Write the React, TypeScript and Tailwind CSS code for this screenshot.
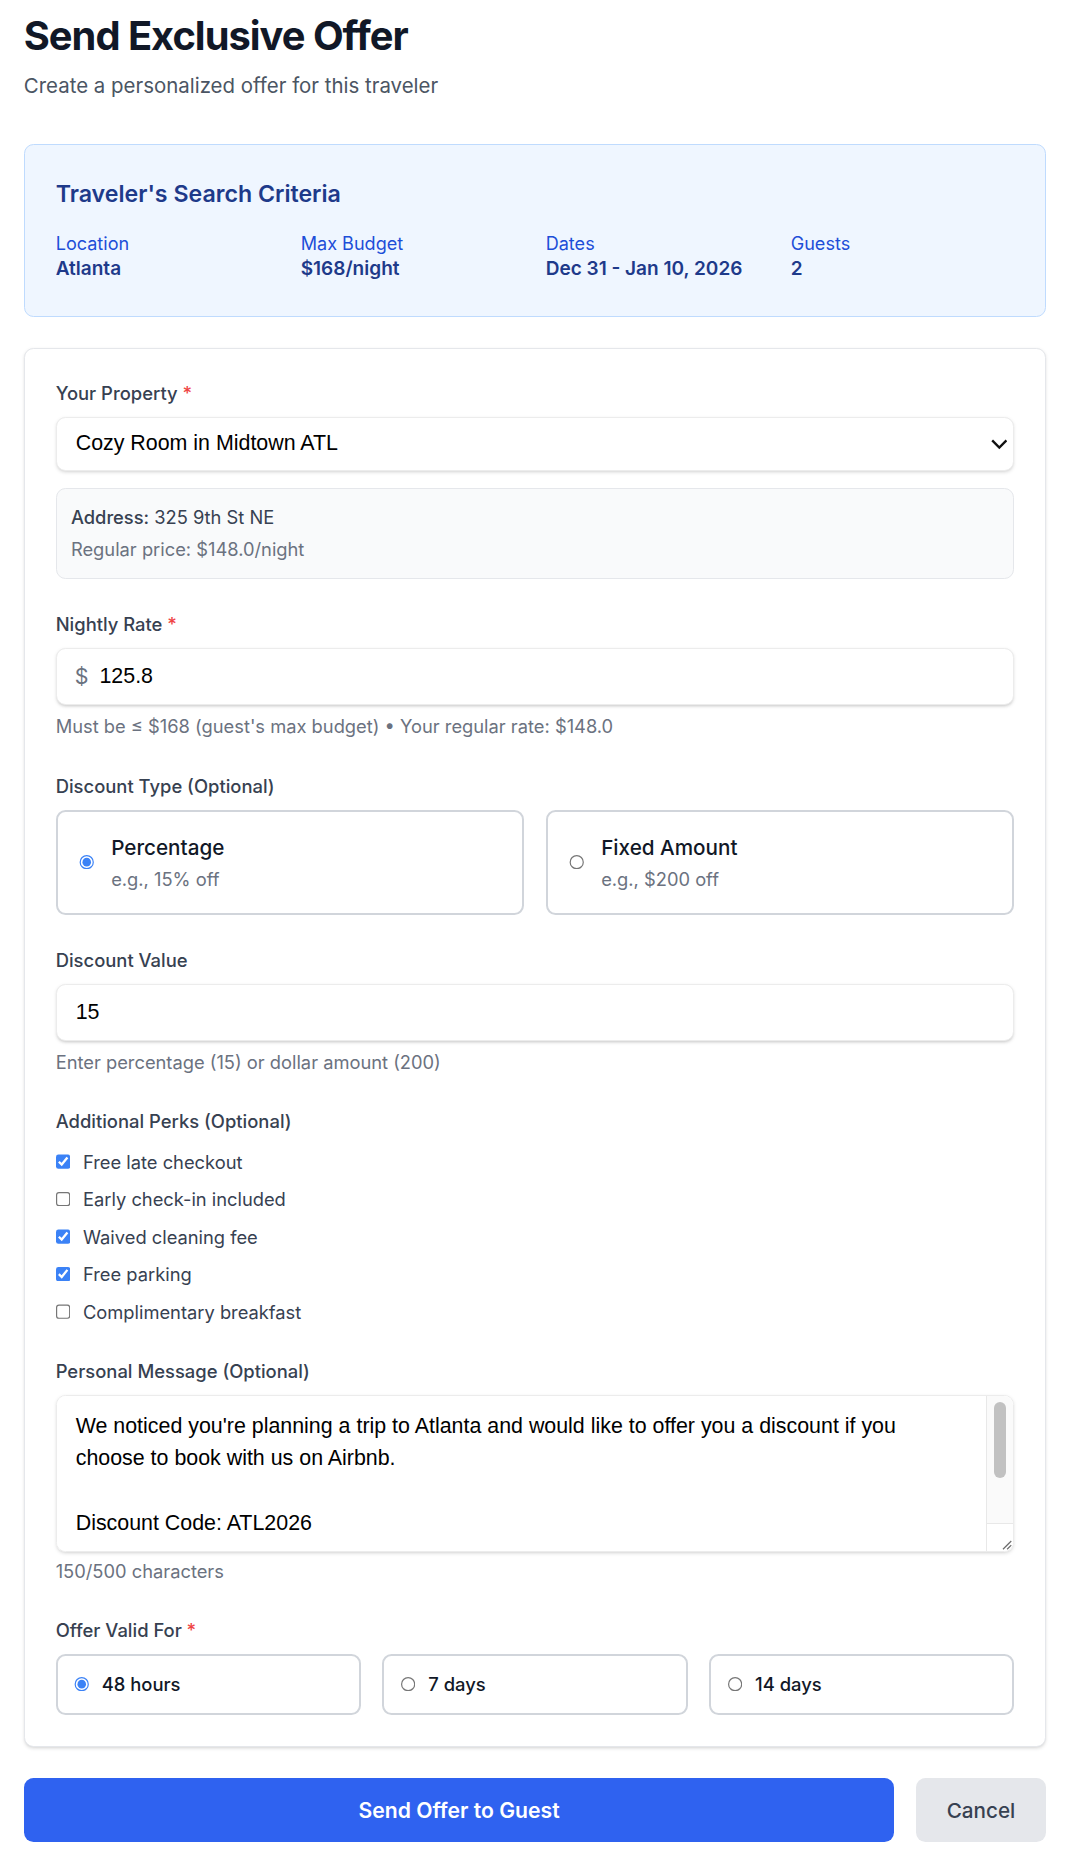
import { useState } from "react";

const criteria = [
  { label: "Location", value: "Atlanta" },
  { label: "Max Budget", value: "$168/night" },
  { label: "Dates", value: "Dec 31 - Jan 10, 2026" },
  { label: "Guests", value: "2" },
];

const perkOptions = [
  "Free late checkout",
  "Early check-in included",
  "Waived cleaning fee",
  "Free parking",
  "Complimentary breakfast",
];

const discountTypes = [
  { id: "percentage", title: "Percentage", hint: "e.g., 15% off" },
  { id: "fixed", title: "Fixed Amount", hint: "e.g., $200 off" },
];

const validity = ["48 hours", "7 days", "14 days"];

const message =
  "We noticed you're planning a trip to Atlanta and would like to offer you a discount if you choose to book with us on Airbnb.\n\nDiscount Code: ATL2026";

function FieldLabel({ children, required }: { children: React.ReactNode; required?: boolean }) {
  return (
    <label className="mb-2 block text-[15.5px] leading-6 font-medium text-[#374151]">
      {children}
      {required && <span className="ml-1 text-[#ef4444]">*</span>}
    </label>
  );
}

export default function App() {
  const [rate, setRate] = useState("125.8");
  const [discountType, setDiscountType] = useState("percentage");
  const [discountValue, setDiscountValue] = useState("15");
  const [perks, setPerks] = useState<string[]>(["Free late checkout", "Waived cleaning fee", "Free parking"]);
  const [note, setNote] = useState(message);
  const [valid, setValid] = useState("48 hours");

  const togglePerk = (p: string) =>
    setPerks((prev) => (prev.includes(p) ? prev.filter((x) => x !== p) : [...prev, p]));

  return (
    <div className="bg-white [zoom:1.189] [font-family:Inter,sans-serif]">
      <div className="px-5 pt-2.5 pb-3">
        <h1 className="text-[33.5px] leading-10 font-bold tracking-tight text-[#111827]">Send Exclusive Offer</h1>
        <p className="mt-2 text-[17.2px] leading-7 text-[#4b5563]">Create a personalized offer for this traveler</p>

        {/* search criteria */}
        <div className="mt-[35px] rounded-lg border border-[#bfdbfe] bg-[#eff6ff] px-[26px] pt-[28px] pb-[27px]">
          <h2 className="text-[19.5px] leading-7 font-semibold text-[#1e3a8a]">Traveler's Search Criteria</h2>
          <div className="mt-[17px] grid grid-cols-4 gap-[18px]">
            {criteria.map((c) => (
              <div key={c.label}>
                <div className="text-[15.2px] leading-5 text-[#1d4ed8]">{c.label}</div>
                <div className="text-base font-semibold text-[#1e3a8a]">{c.value}</div>
              </div>
            ))}
          </div>
        </div>

        {/* form */}
        <div className="mt-[26px] space-y-[26px] rounded-lg border border-[#e5e7eb] bg-white px-[26px] pt-[25px] pb-[26px] shadow-sm">
          <div>
            <FieldLabel required>Your Property</FieldLabel>
            <div className="relative">
              <select className="block h-[46px] w-full appearance-none rounded-lg border border-[#ececec] bg-white px-4 text-lg text-black shadow-sm [font-family:'Liberation_Sans',Arial,sans-serif]">
                <option>Cozy Room in Midtown ATL</option>
              </select>
              <svg
                className="pointer-events-none absolute top-1/2 right-1.5 -translate-y-1/2"
                width="14"
                height="9"
                viewBox="0 0 14 9"
                fill="none"
                stroke="#111"
                strokeWidth="2"
              >
                <polyline points="1,1.5 7,7.5 13,1.5" />
              </svg>
            </div>
            <div className="mt-3.5 rounded-lg border border-[#e5e7eb] bg-[#f9fafb] p-3">
              <p className="text-[15.4px] leading-6 text-[#374151]">
                <span className="font-medium">Address:</span> 325 9th St NE
              </p>
              <p className="mt-[3px] text-[15.4px] leading-6 text-[#6b7280]">Regular price: $148.0/night</p>
            </div>
          </div>

          <div>
            <FieldLabel required>Nightly Rate</FieldLabel>
            <div className="relative">
              <span className="absolute top-1/2 left-4 -translate-y-1/2 text-lg text-[#6b7280]">$</span>
              <input
                value={rate}
                onChange={(e) => setRate(e.target.value)}
                className="block h-12 w-full rounded-lg border border-[#ececec] bg-white pr-4 pl-9 text-lg text-black shadow-sm [font-family:'Liberation_Sans',Arial,sans-serif]"
              />
            </div>
            <p className="mt-1.5 text-[15.4px] leading-6 text-[#6b7280]">
              Must be ≤ $168 (guest's max budget) • Your regular rate: $148.0
            </p>
          </div>

          <div>
            <FieldLabel>Discount Type (Optional)</FieldLabel>
            <div className="grid grid-cols-2 gap-[18px]">
              {discountTypes.map((d) => (
                <label
                  key={d.id}
                  className="flex cursor-pointer items-center rounded-lg border-2 border-[#d1d5db] px-4 py-[16.5px]"
                >
                  <input
                    type="radio"
                    name="discountType"
                    checked={discountType === d.id}
                    onChange={() => setDiscountType(d.id)}
                    className="ml-0.5 accent-[#3b82f6]"
                  />
                  <div className="ml-3.5">
                    <div className="text-[17.4px] leading-7 font-medium text-[#111827]">{d.title}</div>
                    <div className="text-[15.4px] leading-6 text-[#6b7280]">{d.hint}</div>
                  </div>
                </label>
              ))}
            </div>
          </div>

          <div>
            <FieldLabel>Discount Value</FieldLabel>
            <input
              value={discountValue}
              onChange={(e) => setDiscountValue(e.target.value)}
              className="block h-12 w-full rounded-lg border border-[#ececec] bg-white px-4 text-lg text-black shadow-sm [font-family:'Liberation_Sans',Arial,sans-serif]"
            />
            <p className="mt-1.5 text-[15.4px] leading-6 text-[#6b7280]">
              Enter percentage (15) or dollar amount (200)
            </p>
          </div>

          <div>
            <FieldLabel>Additional Perks (Optional)</FieldLabel>
            <div className="space-y-[7.5px] pt-0.5">
              {perkOptions.map((p) => (
                <label key={p} className="flex items-center text-[15.4px] leading-6 text-[#374151]">
                  <input
                    type="checkbox"
                    checked={perks.includes(p)}
                    onChange={() => togglePerk(p)}
                    className="accent-[#3b82f6]"
                  />
                  <span className="ml-2.5">{p}</span>
                </label>
              ))}
            </div>
          </div>

          <div>
            <FieldLabel>Personal Message (Optional)</FieldLabel>
            <div className="relative">
              <textarea
                rows={4}
                value={note}
                onChange={(e) => setNote(e.target.value)}
                className="block h-[132px] w-full resize-none rounded-lg border border-[#ececec] bg-white py-3 pr-[39px] pl-4 text-lg leading-[27px] text-black shadow-sm [font-family:'Liberation_Sans',Arial,sans-serif]"
              />
              {/* scrollbar drawn over the textarea's right edge */}
              <div className="pointer-events-none absolute top-px right-px bottom-px flex w-[23px] flex-col overflow-hidden rounded-r-lg border-l border-[#e8e8e8] bg-[#fafafa]">
                <div className="flex-1 px-[6px] pt-[5px]">
                  <div className="h-[64px] rounded-full bg-[#c1c1c1]" />
                </div>
                <div className="flex h-[23px] items-end justify-end border-t border-[#e8e8e8] bg-white p-px">
                  <svg width="10" height="10" viewBox="0 0 10 10" stroke="#6b6b6b" strokeWidth="1">
                    <line x1="9.5" y1="2.5" x2="2.5" y2="9.5" />
                    <line x1="9.5" y1="6" x2="6" y2="9.5" />
                  </svg>
                </div>
              </div>
            </div>
            <p className="mt-1 text-[15.4px] leading-6 text-[#6b7280]">150/500 characters</p>
          </div>

          <div>
            <FieldLabel required>Offer Valid For</FieldLabel>
            <div className="grid grid-cols-3 gap-[18px]">
              {validity.map((v) => (
                <label
                  key={v}
                  className="flex cursor-pointer items-center rounded-lg border-2 border-[#d1d5db] p-3"
                >
                  <input
                    type="radio"
                    name="valid"
                    checked={valid === v}
                    onChange={() => setValid(v)}
                    className="ml-0.5 accent-[#3b82f6]"
                  />
                  <span className="ml-2.5 text-[15.5px] leading-6 font-medium text-[#111827]">{v}</span>
                </label>
              ))}
            </div>
          </div>
        </div>

        <div className="mt-[26px] flex gap-[18px]">
          <button className="flex-1 rounded-lg bg-[#2f62f0] py-[13px] text-[17.8px] leading-7 font-semibold text-white">
            Send Offer to Guest
          </button>
          <button className="rounded-lg bg-[#e5e7eb] px-[26px] py-[13px] text-[17.4px] leading-7 font-medium text-[#374151]">
            Cancel
          </button>
        </div>
      </div>
    </div>
  );
}
